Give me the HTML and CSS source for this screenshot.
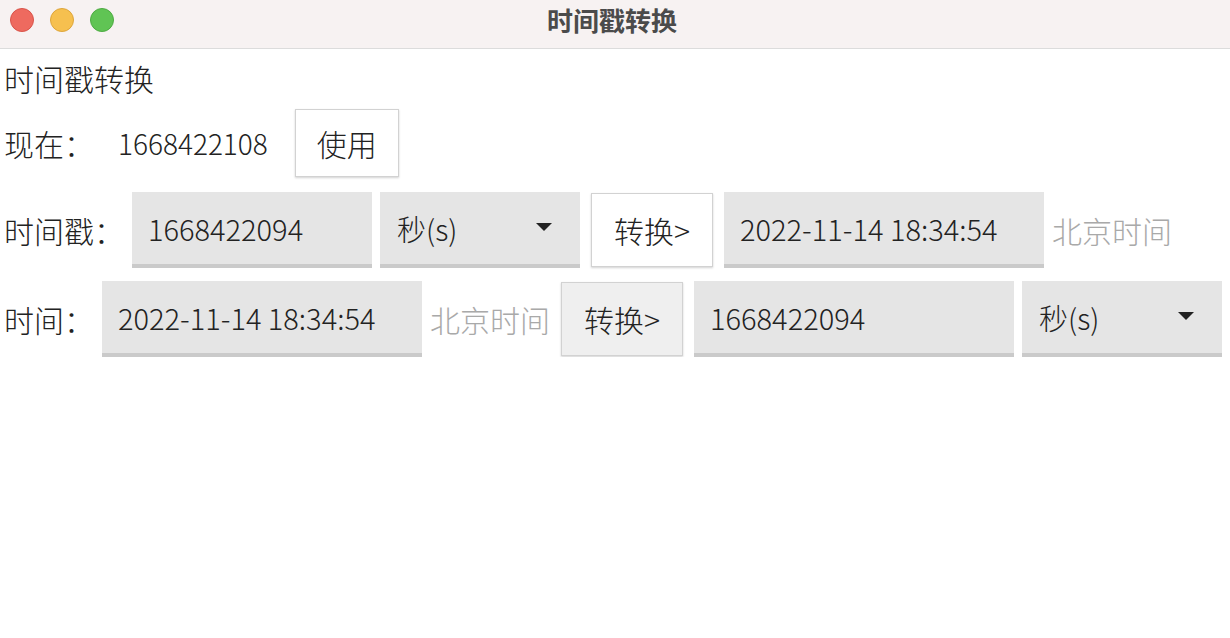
FILE: index.html
```html
<!DOCTYPE html>
<html lang="zh-CN">
<head>
  <meta charset="UTF-8">
  <title>时间戳转换</title>
  <link rel="stylesheet" href="styles.css">
</head>
<body>
  <header class="titlebar">
    <div class="lights">
      <span class="light red"></span>
      <span class="light yellow"></span>
      <span class="light green"></span>
    </div>
    <div class="title">时间戳转换</div>
  </header>

  <main class="app">
    <div class="heading">时间戳转换</div>

    <div class="row row-now">
      <span class="label">现在：</span>
      <span class="now" id="now">1668422108</span>
      <button class="btn btn-use" id="useBtn">使用</button>
    </div>

    <div class="row row-ts">
      <span class="label">时间戳：</span>
      <input class="entry entry-short" id="tsInput" value="1668422094">
      <div class="select">
        <span>秒(s)</span>
        <svg class="caret" width="16" height="8" viewBox="0 0 16 8"><path d="M0 0H16L8 8Z" fill="#222"/></svg>
      </div>
      <button class="btn">转换&gt;</button>
      <input class="entry" id="tsOut" value="2022-11-14 18:34:54">
      <span class="hint">北京时间</span>
    </div>

    <div class="row row-time">
      <span class="label">时间：</span>
      <input class="entry" id="timeInput" value="2022-11-14 18:34:54">
      <span class="hint">北京时间</span>
      <button class="btn btn-pressed">转换&gt;</button>
      <input class="entry" id="timeOut" value="1668422094">
      <div class="select">
        <span>秒(s)</span>
        <svg class="caret" width="16" height="8" viewBox="0 0 16 8"><path d="M0 0H16L8 8Z" fill="#222"/></svg>
      </div>
    </div>
  </main>
</body>
</html>
```

FILE: styles.css
```css
* {
  box-sizing: border-box;
}

body {
  margin: 0;
  background: #fff;
  color: #222;
  font-family: "Noto Sans CJK SC", "Noto Sans", sans-serif;
  font-weight: 300;
}

.titlebar {
  position: relative;
  height: 49px;
  background: #f7f2f2;
  border-bottom: 1px solid #dcdcdc;
}

.lights {
  display: flex;
  gap: 16px;
  padding: 8px 0 0 10px;
}

.light {
  width: 24px;
  height: 24px;
  border-radius: 50%;
}

.red { background: #ee6a5f; border: 1px solid #d9544a; }
.yellow { background: #f6c04f; border: 1px solid #dea63b; }
.green { background: #60c454; border: 1px solid #4eab43; }

.title {
  position: absolute;
  left: 0;
  right: 0;
  top: 3px;
  padding-right: 6px;
  text-align: center;
  font-size: 26px;
  font-weight: bold;
  color: #4b4b4b;
  line-height: 34px;
}

.app {
  padding: 0 0 0 4px;
}

.heading {
  font-size: 30px;
  line-height: 36px;
  margin-top: 11px;
}

.row {
  display: flex;
  align-items: center;
  gap: 8px;
}

.label {
  font-size: 30px;
  white-space: nowrap;
}

.hint {
  font-size: 30px;
  color: #a9a9a9;
  white-space: nowrap;
}

.row-now {
  margin-top: 13px;
  height: 68px;
}

.now {
  font-size: 28px;
  padding: 0 16px;
}

.btn {
  font-family: inherit;
  font-weight: 300;
  font-size: 30px;
  color: #222;
  background: #fff;
  border: 1px solid #d2d2d2;
  box-shadow: 0 1px 2px rgba(0, 0, 0, 0.18);
  padding: 0 22px;
  margin: 0 3px;
  height: 74px;
  cursor: pointer;
}

.btn-use {
  height: 68px;
  padding: 0 21px;
}

.btn-pressed {
  background: #efefef;
}

.row-ts {
  margin-top: 15px;
  height: 76px;
}

.row-time {
  margin-top: 13px;
  height: 76px;
}

.entry {
  width: 320px;
  height: 76px;
  border: none;
  border-bottom: 4px solid #cacaca;
  background: #e5e5e5;
  font-family: inherit;
  font-weight: 300;
  font-size: 29px;
  color: #222;
  padding: 0 16px;
  outline: none;
}

.entry-short {
  width: 240px;
}

.select {
  width: 200px;
  height: 76px;
  background: #e5e5e5;
  border-bottom: 4px solid #cacaca;
  display: flex;
  align-items: center;
  justify-content: space-between;
  padding: 0 28px 0 17px;
  font-size: 29px;
}

.caret {
  margin-top: -2px;
}
```
